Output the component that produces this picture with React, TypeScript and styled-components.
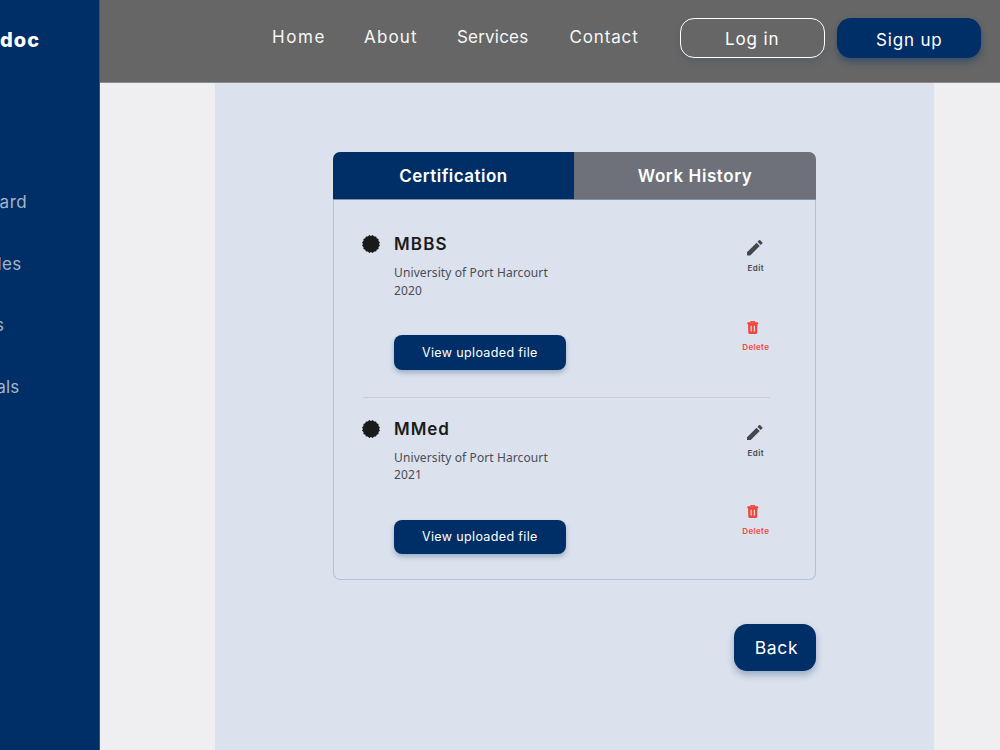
import React from 'react';
import styled, { createGlobalStyle } from 'styled-components';

const navy = '#002e66';
const sans = 'Inter, "Liberation Sans", sans-serif';

const Global = createGlobalStyle`
  *, *::before, *::after { box-sizing: border-box; }
  body { margin: 0; background: #efeff1; font-family: ${sans}; }
  button { font-family: inherit; border: 0; padding: 0; cursor: pointer; }
  h3, p { margin: 0; }
`;

const Page = styled.div`
  display: flex;
  width: 1000px;
  height: 750px;
  overflow: hidden;
`;

const Sidebar = styled.aside`
  flex: none;
  width: 100px;
  padding-top: 28px;
  overflow: hidden;
  background: ${navy};
  border-right: 1px solid #2e5387;
`;

const Brand = styled.div`
  height: 24px;
  line-height: 24px;
  font-size: 20px;
  font-weight: 800;
  letter-spacing: 1px;
  color: #fff;
`;

const SideNav = styled.nav`
  display: flex;
  flex-direction: column;
  gap: 37.5px;
  margin-top: 138px;
`;

const SideLink = styled.a<{ $shift: number; $spacing?: number }>`
  height: 24px;
  line-height: 24px;
  font-size: 17px;
  letter-spacing: ${(p) => p.$spacing ?? 0}px;
  margin-left: ${(p) => p.$shift}px;
  color: #a6b5c9;
`;

const Main = styled.div`
  flex: 1;
  display: flex;
  flex-direction: column;
`;

const Header = styled.header`
  display: flex;
  align-items: flex-start;
  flex: none;
  height: 83px;
  padding: 18px 19px 0 172px;
  background: #666;
  border-bottom: 1px solid #8c8d90;
`;

const Nav = styled.nav`
  display: flex;
  flex: 1;
  padding-top: 7px;
`;

const NavLink = styled.a<{ $width: number; $spacing: number }>`
  width: ${(p) => p.$width}px;
  line-height: 24px;
  font-size: 17px;
  letter-spacing: ${(p) => p.$spacing}px;
  white-space: nowrap;
  color: #f7f7f7;
`;

const Actions = styled.div`
  display: flex;
  gap: 12px;
`;

const HeaderButton = styled.button<{ $filled?: boolean }>`
  width: 144.5px;
  height: 40px;
  border-radius: 14px;
  font-size: 17px;
  letter-spacing: 0.85px;
  line-height: 24px;
  color: #fff;
  background: ${(p) => (p.$filled ? navy : '#666')};
  border: ${(p) => (p.$filled ? '0' : '1.5px solid #fff')};
  padding: ${(p) => (p.$filled ? '3px 0 0 1px' : '1px 0 0 0')};
  box-shadow: 0 4px 7px ${(p) => (p.$filled ? 'rgba(0, 46, 102, 0.42)' : 'rgba(0, 46, 102, 0.12)')};
`;

const Panel = styled.section`
  flex: 1;
  width: 719px;
  margin-left: 115px;
  padding: 69px 118px 0 117.6px;
  background: #dbe1ed;
`;

const Card = styled.div`
  width: 483.4px;
  height: 428px;
  display: flex;
  flex-direction: column;
`;

const Tabs = styled.div`
  display: flex;
  flex: none;
  height: 48px;
  border-radius: 7px 7px 0 0;
  overflow: hidden;
  border-bottom: 1px solid #7f92ae;
`;

const Tab = styled.button<{ $active?: boolean; $spacing: number }>`
  flex: 1;
  font-size: 17px;
  font-weight: 600;
  letter-spacing: ${(p) => p.$spacing}px;
  padding-top: 1px;
  color: #fff;
  background: ${(p) => (p.$active ? navy : '#6e7179')};
`;

const Entries = styled.div`
  flex: 1;
  padding: 0 45px 0 29px;
  border: 1px solid #adc1e3;
  border-top: 0;
  border-radius: 0 0 7px 7px;
`;

const Entry = styled.article`
  display: flex;
  height: 184.4px;
  padding-top: 32.2px;
`;

const Divider = styled.hr`
  height: 1px;
  margin: 13px 0 -14px;
  border: 0;
  background: #c8cdd9;
`;

const Seal = styled.svg`
  flex: none;
  width: 18px;
  height: 18px;
  margin: 3px 14px 0 -0.5px;
`;

const Details = styled.div`
  flex: 1;
`;

const Degree = styled.h3<{ $spacing: number }>`
  line-height: 24px;
  font-size: 17px;
  font-weight: 600;
  letter-spacing: ${(p) => p.$spacing}px;
  color: #1b1b1b;
`;

const School = styled.p`
  margin-top: 8.2px;
  font: 400 12px/17.2px "Noto Sans", sans-serif;
  letter-spacing: 0.1px;
  color: #4b4d54;
`;

const FileButton = styled.button`
  display: block;
  width: 171.5px;
  height: 34.5px;
  margin-top: 36.4px;
  border-radius: 8px;
  font-size: 12.5px;
  font-weight: 400;
  letter-spacing: 0.36px;
  color: #fff;
  background: ${navy};
  box-shadow: 0 3px 5px rgba(0, 46, 102, 0.28);
`;

const Tools = styled.div`
  display: flex;
  flex-direction: column;
  align-items: center;
  width: 32px;
  margin-right: -1.8px;
  padding-top: 8.3px;
`;

const Tool = styled.button<{ $danger?: boolean }>`
  display: flex;
  flex-direction: column;
  align-items: center;
  margin-top: ${(p) => (p.$danger ? 46.8 : 0)}px;
  font-size: 8px;
  font-weight: 600;
  line-height: 12px;
  letter-spacing: ${(p) => (p.$danger ? 0.38 : 0.5)}px;
  background: none;
  color: ${(p) => (p.$danger ? '#f0473e' : '#45474d')};
`;

const PencilIcon = styled.svg`
  width: 15.5px;
  height: 15.5px;
  margin: 0 1.5px 6.2px 0;
`;

const TrashIcon = styled.svg`
  width: 11.5px;
  height: 13px;
  margin: 0 6px 7px 0;
`;

const ToolLabel = styled.span``;

const Footer = styled.div`
  display: flex;
  justify-content: flex-end;
  margin-top: 43.8px;
`;

const BackButton = styled.button`
  width: 82px;
  height: 47.5px;
  padding: 0 0 1px 3px;
  border-radius: 13px;
  font-size: 17.5px;
  letter-spacing: 0.7px;
  color: #fff;
  background: ${navy};
  box-shadow: 0 4px 7px rgba(0, 46, 102, 0.3);
`;

const sealPoints = Array.from({ length: 32 }, (_, i) => {
  const r = i % 2 ? 8.1 : 9.1;
  const a = ((i + 1) * Math.PI) / 16;
  return `${(9 + r * Math.sin(a)).toFixed(2)},${(9 - r * Math.cos(a)).toFixed(2)}`;
}).join(' ');

const navLinks = [
  { label: 'Home', width: 92, spacing: 1.6 },
  { label: 'About', width: 93, spacing: 1.15 },
  { label: 'Services', width: 112.5, spacing: 0.2 },
  { label: 'Contact', width: 80, spacing: 0.85 },
];

const entries = [
  { degree: 'MBBS', spacing: 1.1, year: '2020' },
  { degree: 'MMed', spacing: 0.95, year: '2021' },
];

function Certificate({ degree, spacing, year }: (typeof entries)[number]) {
  return (
    <Entry>
      <Seal viewBox="0 0 18 18">
        <polygon points={sealPoints} fill="#191a1a" />
      </Seal>
      <Details>
        <Degree $spacing={spacing}>{degree}</Degree>
        <School>
          University of Port Harcourt
          <br />
          {year}
        </School>
        <FileButton>View uploaded file</FileButton>
      </Details>
      <Tools>
        <Tool>
          <PencilIcon viewBox="3 3 18 18" fill="currentColor">
            <path d="M3 17.25V20.5q0 .5.5.5h3.25L17.81 9.94l-3.75-3.75L3 17.25zM20.71 7.04c.39-.39.39-1.02 0-1.41l-2.34-2.34a1 1 0 0 0-1.41 0l-1.83 1.83 3.75 3.75 1.83-1.83z" />
          </PencilIcon>
          <ToolLabel>Edit</ToolLabel>
        </Tool>
        <Tool $danger>
          <TrashIcon viewBox="0 0 11 13">
            <path
              fill="currentColor"
              fillRule="evenodd"
              d="M3 1.3V.9Q3 0 3.9 0h3.2Q8 0 8 .9v.4h2.4q.6 0 .6.6v.7q0 .5-.6.5H10.300l-.4 8.700q-.1 1.200-1.300 1.200H2.400q-1.200 0-1.300-1.200L.7 3.100H.6Q0 3.100 0 2.600V1.900q0-.6.6-.6zM4.100 1.300h2.800V1H4.100zM3.300 4.800v5.600h1.200V4.800zM6.500 4.800v5.600h1.200V4.800z"
            />
          </TrashIcon>
          <ToolLabel>Delete</ToolLabel>
        </Tool>
      </Tools>
    </Entry>
  );
}

export default function App() {
  return (
    <Page>
      <Global />
      <Sidebar>
        <Brand>doc</Brand>
        <SideNav>
          <SideLink $shift={-0.5} $spacing={0.6}>ard</SideLink>
          <SideLink $shift={-2.6} $spacing={0.4}>les</SideLink>
          <SideLink $shift={-5}>s</SideLink>
          <SideLink $shift={-3.8} $spacing={0.2}>als</SideLink>
        </SideNav>
      </Sidebar>
      <Main>
        <Header>
          <Nav>
            {navLinks.map((l) => (
              <NavLink key={l.label} $width={l.width} $spacing={l.spacing}>
                {l.label}
              </NavLink>
            ))}
          </Nav>
          <Actions>
            <HeaderButton>Log in</HeaderButton>
            <HeaderButton $filled>Sign up</HeaderButton>
          </Actions>
        </Header>
        <Panel>
          <Card>
            <Tabs>
              <Tab $active $spacing={0.46}>Certification</Tab>
              <Tab $spacing={0.6}>Work History</Tab>
            </Tabs>
            <Entries>
              <Certificate {...entries[0]} />
              <Divider />
              <Certificate {...entries[1]} />
            </Entries>
          </Card>
          <Footer>
            <BackButton>Back</BackButton>
          </Footer>
        </Panel>
      </Main>
    </Page>
  );
}
